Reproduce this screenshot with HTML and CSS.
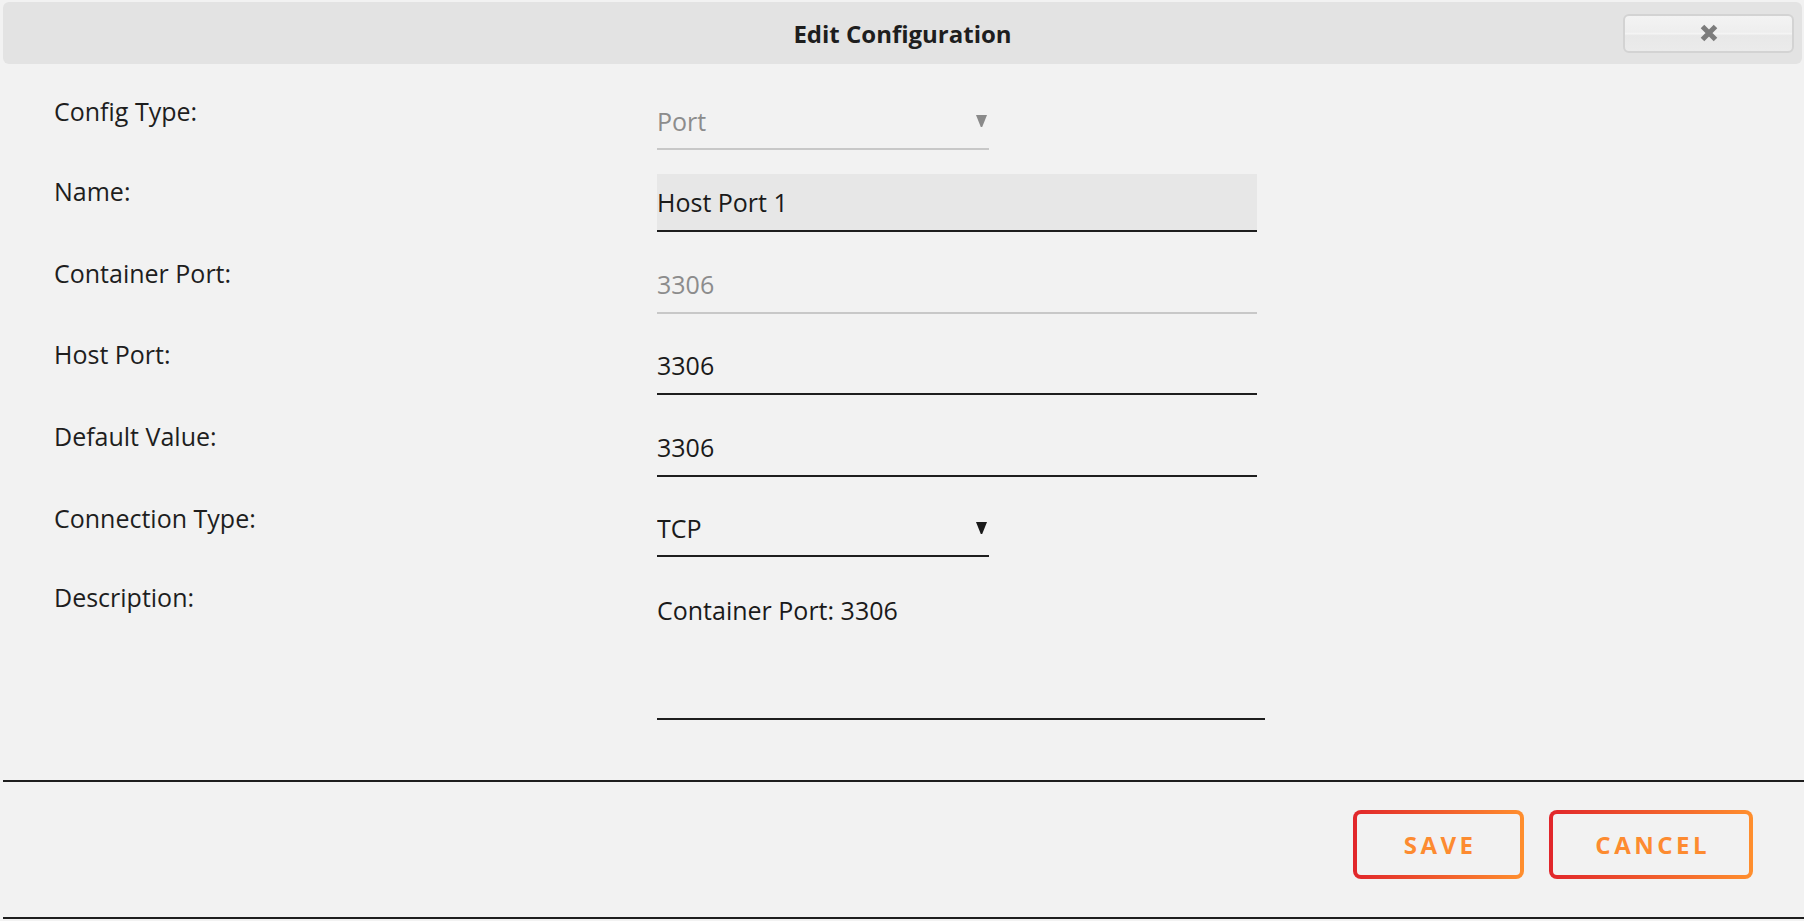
FILE: index.html
```html
<!DOCTYPE html>
<html>
<head>
  <meta charset="utf-8">
  <title>Edit Configuration</title>
  <link rel="stylesheet" href="styles.css">
</head>
<body>
  <div class="dialog">
    <div class="titlebar">
      <h1>Edit Configuration</h1>
      <button class="close-button" title="Close">
        <svg width="20" height="20" viewBox="0 0 20 20"><path d="M3.5 3.5 L16.5 16.5 M16.5 3.5 L3.5 16.5" stroke="#7c7c7c" stroke-width="5"/></svg>
      </button>
    </div>

    <div class="content">
      <div class="form-row">
        <label for="configType">Config Type:</label>
        <div class="select-wrap disabled">
          <select id="configType" disabled>
            <option>Port</option>
          </select>
          <span class="arrow"><svg width="11" height="12" viewBox="0 0 11 12"><polygon points="0,0 11,0 6.2,12 4.8,12" fill="currentColor"/></svg></span>
        </div>
      </div>

      <div class="form-row">
        <label for="name">Name:</label>
        <input type="text" id="name" class="filled" value="Host Port 1">
      </div>

      <div class="form-row">
        <label for="containerPort">Container Port:</label>
        <input type="text" id="containerPort" value="3306" disabled>
      </div>

      <div class="form-row">
        <label for="hostPort">Host Port:</label>
        <input type="text" id="hostPort" value="3306">
      </div>

      <div class="form-row">
        <label for="defaultValue">Default Value:</label>
        <input type="text" id="defaultValue" value="3306">
      </div>

      <div class="form-row">
        <label for="connType">Connection Type:</label>
        <div class="select-wrap">
          <select id="connType">
            <option selected>TCP</option>
            <option>UDP</option>
          </select>
          <span class="arrow"><svg width="11" height="12" viewBox="0 0 11 12"><polygon points="0,0 11,0 6.2,12 4.8,12" fill="currentColor"/></svg></span>
        </div>
      </div>

      <div class="form-row">
        <label for="description">Description:</label>
        <textarea id="description">Container Port: 3306</textarea>
      </div>
    </div>

    <div class="button-pane">
      <button class="action-button">SAVE</button>
      <button class="action-button">CANCEL</button>
    </div>
  </div>
</body>
</html>
```

FILE: styles.css
```css
* {
  box-sizing: border-box;
}

body {
  margin: 0;
  background-color: #f2f2f2;
  font-family: "Open Sans", "Noto Sans", sans-serif;
  color: #1c1c1c;
}

.titlebar {
  display: grid;
  grid-template-columns: 1fr auto 1fr;
  align-items: center;
  height: 62px;
  margin: 2px 2px 0 3px;
  padding: 0 8px;
  background-color: #e3e3e3;
  border-radius: 6px;
}

.titlebar h1 {
  grid-column: 2;
  margin: 0;
  font-size: 24px;
  font-weight: 700;
  color: #1e1e1e;
}

.close-button {
  grid-column: 3;
  justify-self: end;
  display: flex;
  align-items: center;
  justify-content: center;
  width: 171px;
  height: 39px;
  padding: 0;
  border: 2px solid #d3d3d3;
  border-radius: 6px;
  background: linear-gradient(#f3f3f3 0%, #eeeeee 46%, #f4f4f4 50%, #e8e8e8 56%, #ebebeb 100%);
  cursor: pointer;
}

.content {
  padding: 30px 0 60px 54px;
}

.form-row {
  display: flex;
  align-items: flex-start;
  margin-bottom: 23.7px;
}

.form-row:first-child {
  margin-bottom: 24px;
}

.form-row:last-child {
  margin-bottom: 0;
}

.form-row label {
  width: 603px;
  font-size: 25px;
  line-height: 34px;
  color: #1e1e1e;
}

input[type="text"], select, textarea {
  font-family: inherit;
  font-size: 25px;
  color: #1a1a1a;
  background: transparent;
  border: none;
  border-radius: 0;
  outline: none;
}

input[type="text"] {
  width: 600px;
  height: 58px;
  padding: 0;
  border-bottom: 2px solid #1e1e1e;
}

input.filled {
  background-color: #e7e7e7;
}

input[type="text"]:disabled {
  color: #8c8c8c;
  border-bottom-color: #c8c8c8;
}

.select-wrap {
  display: flex;
  align-items: center;
  width: 332px;
  height: 56px;
  border-bottom: 2px solid #1e1e1e;
  color: #1a1a1a;
}

.select-wrap.disabled {
  border-bottom-color: #c8c8c8;
  color: #8a8a8a;
}

.select-wrap select {
  flex: 1;
  height: 54px;
  padding: 0;
  line-height: 34px;
  -webkit-appearance: none;
  appearance: none;
  color: inherit;
}

.select-wrap select:disabled {
  opacity: 1;
  color: #8c8c8c;
}

.arrow {
  display: flex;
  margin-right: 2px;
  pointer-events: none;
}

textarea {
  width: 608px;
  height: 140px;
  padding: 12.5px 0 0;
  line-height: 34px;
  border-bottom: 2px solid #1e1e1e;
  resize: none;
  overflow: hidden;
}

.button-pane {
  display: flex;
  justify-content: flex-end;
  gap: 25px;
  margin-left: 3px;
  padding: 28px 51px 38px 0;
  border-top: 2px solid #1e1e1e;
  border-bottom: 2px solid #1e1e1e;
}

.action-button {
  min-width: 171px;
  height: 69px;
  padding: 0 39px;
  border: 4px solid transparent;
  border-radius: 8px;
  background: linear-gradient(#f2f2f2, #f2f2f2) padding-box,
              linear-gradient(90deg, #e1262b, #ff8f2e) border-box;
  color: #fd8b30;
  font-family: inherit;
  font-size: 24px;
  font-weight: 700;
  letter-spacing: 3.5px;
  text-indent: 3.5px;
  cursor: pointer;
}
```
